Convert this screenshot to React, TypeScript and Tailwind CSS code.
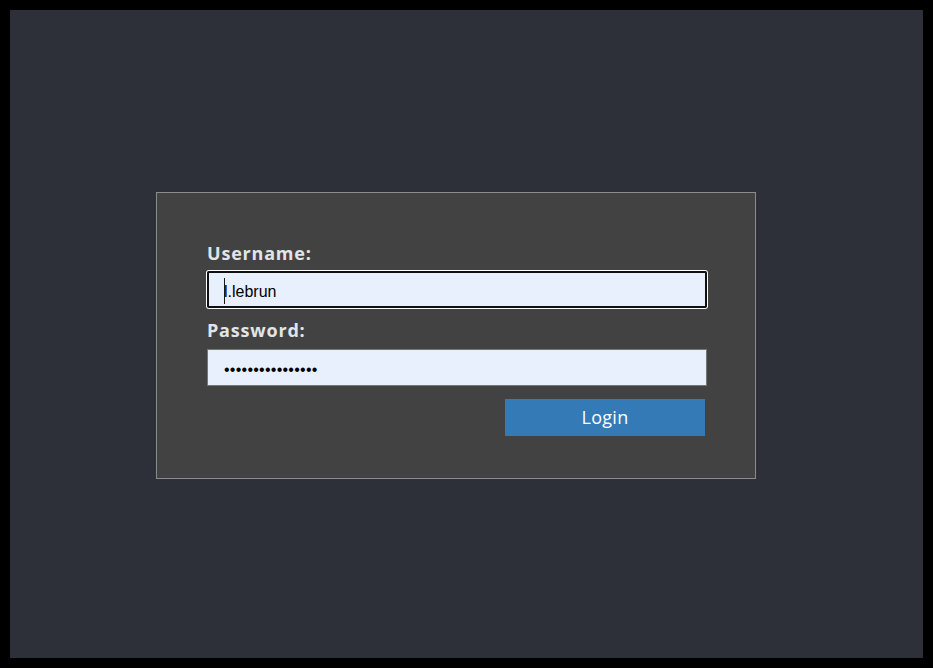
import { useState } from 'react';

export default function App() {
  const [username, setUsername] = useState('l.lebrun');
  const [password, setPassword] = useState('aaaaaaaaaaaaaaaa');

  return (
    <div className="h-[668px] w-[933px] bg-black p-[10px]">
      <div className="flex h-full w-full items-center bg-[#2d3038] pl-[146px] pt-[2px]">
        <form
          onSubmit={(e) => e.preventDefault()}
          className="flex h-[287px] w-[600px] flex-col border border-[#8c8c8c] bg-[#424242] px-[50px] pt-[48px] font-['Open_Sans',sans-serif]"
        >
          <label className="text-[18px] font-bold leading-[24px] tracking-[0.8px] text-[#e1e4e8]" htmlFor="username">
            Username:
          </label>
          <div className="relative mt-[6px]">
            <input
              id="username"
              type="text"
              value={username}
              onChange={(e) => setUsername(e.target.value)}
              className="block h-[37px] w-[500px] rounded-[2px] border border-[#767676] bg-[#e8f0fe] pl-[16px] pt-[6px] font-['Liberation_Sans',Arial,sans-serif] text-[16px] text-black outline-2 outline-offset-[-2px] outline-[#101010] shadow-[0_0_0_1px_#ffffff]"
            />
            <span className="pointer-events-none absolute left-[17px] top-[7px] h-[26px] w-px bg-[#1a1a1a]" />
          </div>

          <label className="mt-[10px] text-[18px] font-bold leading-[24px] tracking-[0.8px] text-[#e1e4e8]" htmlFor="password">
            Password:
          </label>
          <input
            id="password"
            type="password"
            value={password}
            onChange={(e) => setPassword(e.target.value)}
            className="mt-[7px] block h-[37px] w-[500px] border border-[#767676] bg-[#e8f0fe] pl-[16px] pt-[6px] font-['Liberation_Sans',Arial,sans-serif] text-[16px] tracking-[0.25px] text-black outline-none"
          />

          <div className="mt-[13px] flex w-[498px] justify-end">
            <button
              type="submit"
              className="h-[37px] w-[200px] bg-[#337ab7] text-[18px] leading-none tracking-[0.3px] text-white"
            >
              Login
            </button>
          </div>
        </form>
      </div>
    </div>
  );
}
